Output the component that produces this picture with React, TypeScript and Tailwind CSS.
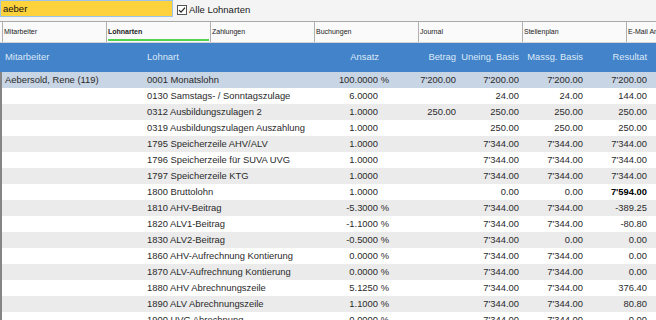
import React from "react";

type Row = {
  m?: string;
  l: string;
  a: string;
  pct: boolean;
  b?: string;
  u: string;
  g: string;
  r: string;
  bold?: boolean;
};

const rows: Row[] = [
  { m: "Aebersold, Rene (119)", l: "0001 Monatslohn", a: "100.0000", pct: true, b: "7'200.00", u: "7'200.00", g: "7'200.00", r: "7'200.00" },
  { l: "0130 Samstags- / Sonntagszulage", a: "6.0000", pct: false, u: "24.00", g: "24.00", r: "144.00" },
  { l: "0312 Ausbildungszulagen 2", a: "1.0000", pct: false, b: "250.00", u: "250.00", g: "250.00", r: "250.00" },
  { l: "0319 Ausbildungszulagen Auszahlung", a: "1.0000", pct: false, u: "250.00", g: "250.00", r: "250.00" },
  { l: "1795 Speicherzeile AHV/ALV", a: "1.0000", pct: false, u: "7'344.00", g: "7'344.00", r: "7'344.00" },
  { l: "1796 Speicherzeile für SUVA UVG", a: "1.0000", pct: false, u: "7'344.00", g: "7'344.00", r: "7'344.00" },
  { l: "1797 Speicherzeile KTG", a: "1.0000", pct: false, u: "7'344.00", g: "7'344.00", r: "7'344.00" },
  { l: "1800 Bruttolohn", a: "1.0000", pct: false, u: "0.00", g: "0.00", r: "7'594.00", bold: true },
  { l: "1810 AHV-Beitrag", a: "-5.3000", pct: true, u: "7'344.00", g: "7'344.00", r: "-389.25" },
  { l: "1820 ALV1-Beitrag", a: "-1.1000", pct: true, u: "7'344.00", g: "7'344.00", r: "-80.80" },
  { l: "1830 ALV2-Beitrag", a: "-0.5000", pct: true, u: "7'344.00", g: "0.00", r: "0.00" },
  { l: "1860 AHV-Aufrechnung Kontierung", a: "0.0000", pct: true, u: "7'344.00", g: "7'344.00", r: "0.00" },
  { l: "1870 ALV-Aufrechnung Kontierung", a: "0.0000", pct: true, u: "7'344.00", g: "7'344.00", r: "0.00" },
  { l: "1880 AHV Abrechnungszeile", a: "5.1250", pct: true, u: "7'344.00", g: "7'344.00", r: "376.40" },
  { l: "1890 ALV Abrechnungszeile", a: "1.1000", pct: true, u: "7'344.00", g: "7'344.00", r: "80.80" },
  { l: "1900 UVG Abrechnung", a: "0.0000", pct: true, u: "7'344.00", g: "7'344.00", r: "0.00" },
];

const tabs = ["Mitarbeiter", "Lohnarten", "Zahlungen", "Buchungen", "Journal", "Stellenplan", "E-Mail Anhang"];

export default function App() {
  return (
    <div className="w-[656px] h-[320px] overflow-hidden bg-[#f4f4f4] font-['Liberation_Sans',Arial,sans-serif] text-[#2a2a2a]">
      {/* top bar */}
      <div className="h-[21px] flex items-start">
        <div className="w-[173px] h-[17px] bg-[#fdd23c] border border-[#9cc4ea] pl-[2px] text-[9.5px] leading-[15px] text-[#111]">
          aeber
        </div>
        <div className="ml-[4px] mt-[4px] flex items-center gap-[2px]">
          <svg width="10" height="10" viewBox="0 0 10 10">
            <rect x="0.5" y="0.5" width="9" height="9" fill="#ffffff" stroke="#555" strokeWidth="1" />
            <path d="M2 5.2 L4 7.2 L8 2.6" fill="none" stroke="#222" strokeWidth="1.2" />
          </svg>
          <span className="text-[9.5px] leading-[12px] text-[#1a1a1a]">Alle Lohnarten</span>
        </div>
      </div>
      {/* tabs */}
      <div className="h-[22px] flex pl-[2px] bg-[#fafafa] border-t border-[#a9a9a9] border-b border-b-[#d4d4d4]">
        {tabs.map((t, i) => (
          <div
            key={t}
            className={
              "relative w-[104px] shrink-0 border-l border-[#b0b0b0] pl-[1px] text-[7px] leading-[20px] whitespace-nowrap overflow-hidden text-[#222] " +
              (i === 1 ? "font-bold" : "")
            }
          >
            {t}
            {i === 1 && <div className="absolute left-[1px] right-[1px] bottom-[1px] h-[2px] bg-[#52d44e]" />}
          </div>
        ))}
      </div>
      {/* header */}
      <div className="h-[29px] bg-[#4283ca] grid grid-cols-[143px_157px_92px_67px_63px_64px_70px] items-center text-[9.4px] text-[#dde9f7]">
        <div className="pl-[5px]">Mitarbeiter</div>
        <div className="pl-[4px]">Lohnart</div>
        <div className="text-right pr-[13px]">Ansatz</div>
        <div className="text-right pr-[3px]">Betrag</div>
        <div className="text-right pr-[3px] whitespace-nowrap">Uneing. Basis</div>
        <div className="text-right pr-[3px] whitespace-nowrap">Massg. Basis</div>
        <div className="text-right pr-[9px]">Resultat</div>
      </div>
      {/* body */}
      <div className="border-l-2 border-[#858585]">
        {rows.map((r, i) => (
          <div
            key={r.l}
            className={
              "h-[16px] grid grid-cols-[141px_157px_92px_67px_63px_64px_70px] items-center text-[9.4px] leading-[16px] whitespace-nowrap " +
              (i === 0 ? "bg-[#c8d5e5]" : i % 2 === 0 ? "bg-[#ebebeb]" : "bg-white")
            }
          >
            <div className="pl-[3px]">{r.m ?? ""}</div>
            <div className="pl-[4px]">{r.l}</div>
            <div className="text-right pr-[3px] flex justify-end">
              <span>{r.a}</span>
              <span className="inline-block w-[11px] text-right">{r.pct ? "%" : ""}</span>
            </div>
            <div className="text-right pr-[3px]">{r.b ?? ""}</div>
            <div className="text-right pr-[3px]">{r.u}</div>
            <div className="text-right pr-[3px]">{r.g}</div>
            <div className={"text-right pr-[9px] " + (r.bold ? "font-bold text-black" : "")}>{r.r}</div>
          </div>
        ))}
      </div>
    </div>
  );
}
